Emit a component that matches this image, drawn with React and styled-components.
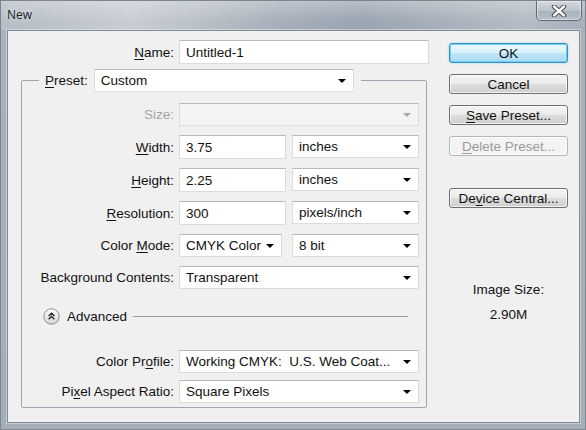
import styled, { createGlobalStyle } from 'styled-components';

const GlobalStyle = createGlobalStyle`
  html, body {
    margin: 0;
    padding: 0;
    background: #a9b2bc;
  }
  body {
    width: 586px;
    height: 430px;
    overflow: hidden;
    font-family: "Liberation Sans", Arial, sans-serif;
    font-size: 13.5px;
    color: #111;
  }
  u {
    text-underline-offset: 2px;
  }
`;

export default function App() {
  return (
    <>
      <GlobalStyle />
      <Window>
        <TitleBar>
          <Title>New</Title>
          <CloseButton>
            <svg width="16" height="12" viewBox="0 0 16 12">
              <path d="M3 1.5 L13 10.5 M13 1.5 L3 10.5" stroke="#3b4550" strokeWidth="4.4" strokeLinecap="round" />
              <path d="M3 1.5 L13 10.5 M13 1.5 L3 10.5" stroke="#ffffff" strokeWidth="2.4" strokeLinecap="round" />
            </svg>
          </CloseButton>
        </TitleBar>

        <Content>
          <LeftColumn>
            <NameRow>
              <Label>
                <u>N</u>ame:
              </Label>
              <TextBox>Untitled-1</TextBox>
            </NameRow>

            <GroupBox>
              <Legend>
                <Label>
                  <u>P</u>reset:
                </Label>
                <Select width={260}>Custom</Select>
              </Legend>

              <FormGrid gap={9} top={11}>
                <Label disabled>Size:</Label>
                <Select disabled />

                <Label>
                  <u>W</u>idth:
                </Label>
                <Pair>
                  <TextBox width={107}>3.75</TextBox>
                  <Select width={127}>inches</Select>
                </Pair>

                <Label>
                  <u>H</u>eight:
                </Label>
                <Pair>
                  <TextBox width={107}>2.25</TextBox>
                  <Select width={127}>inches</Select>
                </Pair>

                <Label>
                  <u>R</u>esolution:
                </Label>
                <Pair>
                  <TextBox width={107}>300</TextBox>
                  <Select width={127}>pixels/inch</Select>
                </Pair>

                <Label>
                  Color <u>M</u>ode:
                </Label>
                <Pair gap={10}>
                  <Select width={103}>CMYK Color</Select>
                  <Select width={127}>8 bit</Select>
                </Pair>

                <Label>Background Contents:</Label>
                <Select>Transparent</Select>
              </FormGrid>

              <AdvancedRow>
                <svg width="17" height="17" viewBox="0 0 17 17">
                  <defs>
                    <linearGradient id="adv" x1="0" y1="0" x2="0" y2="1">
                      <stop offset="0" stopColor="#ffffff" />
                      <stop offset="1" stopColor="#d4d4d4" />
                    </linearGradient>
                  </defs>
                  <circle cx="8.5" cy="8.5" r="7.7" fill="url(#adv)" stroke="#8c8c8c" />
                  <path d="M5.6 8 L8.5 5.2 L11.4 8 M5.6 11.2 L8.5 8.4 L11.4 11.2" fill="none" stroke="#2a2a2a" strokeWidth="1.4" />
                </svg>
                <AdvancedText>Advanced</AdvancedText>
                <Rule />
              </AdvancedRow>

              <FormGrid gap={7} top={25} bottom={4}>
                <Label>
                  Color Pr<u>o</u>file:
                </Label>
                <Select>Working CMYK:&nbsp; U.S. Web Coat...</Select>

                <Label>
                  Pi<u>x</u>el Aspect Ratio:
                </Label>
                <Select>Square Pixels</Select>
              </FormGrid>
            </GroupBox>
          </LeftColumn>

          <RightColumn>
            <Button primary>OK</Button>
            <Button>Cancel</Button>
            <Button>
              <u>S</u>ave Preset...
            </Button>
            <Button disabled>
              <u>D</u>elete Preset...
            </Button>
            <Button spaced>
              De<u>v</u>ice Central...
            </Button>

            <ImageSize>
              <span>Image Size:</span>
              <span>2.90M</span>
            </ImageSize>
          </RightColumn>
        </Content>
      </Window>
    </>
  );
}

const Window = styled.div`
  width: 586px;
  height: 430px;
  box-sizing: border-box;
  display: flex;
  flex-direction: column;
  border: 1px solid #7c8692;
  background: linear-gradient(to bottom, #b3bbc4 0px, #a9b2bc 40px, #a5aeb8 100%);
`;

const TitleBar = styled.div`
  height: 29px;
  display: flex;
  align-items: flex-start;
  padding-left: 6px;
  padding-right: 3px;
  background:
    linear-gradient(to bottom, rgba(255, 255, 255, 0.28), rgba(255, 255, 255, 0) 70%),
    linear-gradient(
      to right,
      #b5bdc6 0%,
      #c8cdd3 22%,
      #bcc3ca 32%,
      #a6afba 48%,
      #9aa5b1 62%,
      #aab3bd 78%,
      #b4bcc5 90%,
      #a7b0bb 100%
    );
`;

const Title = styled.span`
  font-family: "Open Sans", "Noto Sans", sans-serif;
  font-size: 12px;
  line-height: 28px;
  color: #222;
  text-shadow: 0 0 6px rgba(255, 255, 255, 0.8);
`;

const CloseButton = styled.div`
  margin-left: auto;
  width: 46px;
  height: 20px;
  box-sizing: border-box;
  display: flex;
  align-items: center;
  justify-content: center;
  border: 1px solid #5f6a77;
  border-top: none;
  border-radius: 0 0 5px 5px;
  background: linear-gradient(to bottom, #d3d9df 0%, #bcc4cc 50%, #a9b2bc 51%, #b8c0c8 100%);
  box-shadow: inset 0 0 0 1px rgba(255, 255, 255, 0.45);
`;

const Content = styled.div`
  flex: 1;
  margin: 0 5px 6px 6px;
  box-sizing: border-box;
  display: flex;
  align-items: flex-start;
  padding: 9px 0 0 13px;
  background: #f0f0f0;
  border: 1px solid #828c98;
  box-shadow: 0 0 0 1px rgba(255, 255, 255, 0.35);
`;

const LeftColumn = styled.div`
  width: 408px;
  display: flex;
  flex-direction: column;
`;

const NameRow = styled.div`
  display: grid;
  grid-template-columns: 153px 250px;
  column-gap: 5px;
  align-items: center;
  height: 24px;
`;

const Label = styled.span`
  text-align: right;
  white-space: nowrap;
  color: ${({ disabled }) => (disabled ? '#a3a3a3' : '#111')};
`;

const fieldBox = `
  box-sizing: border-box;
  height: 23px;
  display: flex;
  align-items: center;
  padding: 0 6px;
  background: #ffffff;
  border: 1px solid #dcdcdc;
  border-top-color: #b9b9b9;
  color: #111;
  white-space: nowrap;
  overflow: hidden;
`;

const TextBox = styled.div`
  ${fieldBox}
  height: 24px;
  width: ${({ width }) => (width ? `${width}px` : 'auto')};
`;

const Select = styled.div`
  ${fieldBox}
  position: relative;
  width: ${({ width }) => (width ? `${width}px` : 'auto')};
  padding-right: 20px;
  background: ${({ disabled }) => (disabled ? '#f4f4f4' : '#ffffff')};

  &::after {
    content: '';
    position: absolute;
    right: 7px;
    top: 50%;
    margin-top: -2px;
    border-left: 4px solid transparent;
    border-right: 4px solid transparent;
    border-top: 4px solid ${({ disabled }) => (disabled ? '#a8a8a8' : '#000')};
  }
`;

const GroupBox = styled.fieldset`
  margin: 5px 0 0 0;
  padding: 0;
  width: 406px;
  box-sizing: border-box;
  border: 1px solid #a2a7ad;
  border-radius: 2px;
  min-width: 0;
`;

const Legend = styled.legend`
  margin-left: 17px;
  padding: 0 7px 0 6px;
  display: flex;
  align-items: center;
  gap: 6px;
`;

const FormGrid = styled.div`
  display: grid;
  grid-template-columns: 152px 240px;
  column-gap: 5px;
  row-gap: ${({ gap }) => gap}px;
  align-items: center;
  padding-top: ${({ top }) => top}px;
  padding-bottom: ${({ bottom }) => bottom || 0}px;
`;

const Pair = styled.div`
  display: flex;
  justify-content: space-between;
  gap: ${({ gap }) => gap || 6}px;
`;

const AdvancedRow = styled.div`
  display: flex;
  align-items: center;
  height: 18px;
  margin-top: 18px;
  padding: 0 18px 0 21px;
`;

const AdvancedText = styled.span`
  margin-left: 7px;
`;

const Rule = styled.div`
  flex: 1;
  height: 1px;
  margin-left: 6px;
  background: #9c9c9c;
`;

const RightColumn = styled.div`
  margin-left: 20px;
  margin-top: 3px;
  width: 119px;
  display: flex;
  flex-direction: column;
  gap: 11px;
`;

const Button = styled.div`
  box-sizing: border-box;
  height: 20px;
  display: flex;
  align-items: center;
  justify-content: center;
  border-radius: 3px;
  white-space: nowrap;
  margin-top: ${({ spaced }) => (spaced ? '21px' : '0')};
  color: ${({ disabled }) => (disabled ? '#9a9a9a' : '#111')};
  border: 1px solid
    ${({ primary, disabled }) => (primary ? '#3a8fc0' : disabled ? '#b4b8bb' : '#707070')};
  background: ${({ primary, disabled }) =>
    primary
      ? 'linear-gradient(to bottom, #ecf8fe 0%, #d9f1fc 48%, #bfe6f8 52%, #a9dbf4 100%)'
      : disabled
      ? '#f4f4f4'
      : 'linear-gradient(to bottom, #f4f4f4 0%, #ebebeb 48%, #dddddd 52%, #cfcfcf 100%)'};
  box-shadow: ${({ primary }) =>
    primary
      ? 'inset 0 0 0 1px #6fd0f4, 0 0 2px rgba(80, 190, 240, 0.6)'
      : 'inset 0 0 0 1px rgba(255, 255, 255, 0.7)'};
`;

const ImageSize = styled.div`
  margin-top: 63px;
  display: flex;
  flex-direction: column;
  align-items: center;
  gap: 9px;
  line-height: 16px;
`;
